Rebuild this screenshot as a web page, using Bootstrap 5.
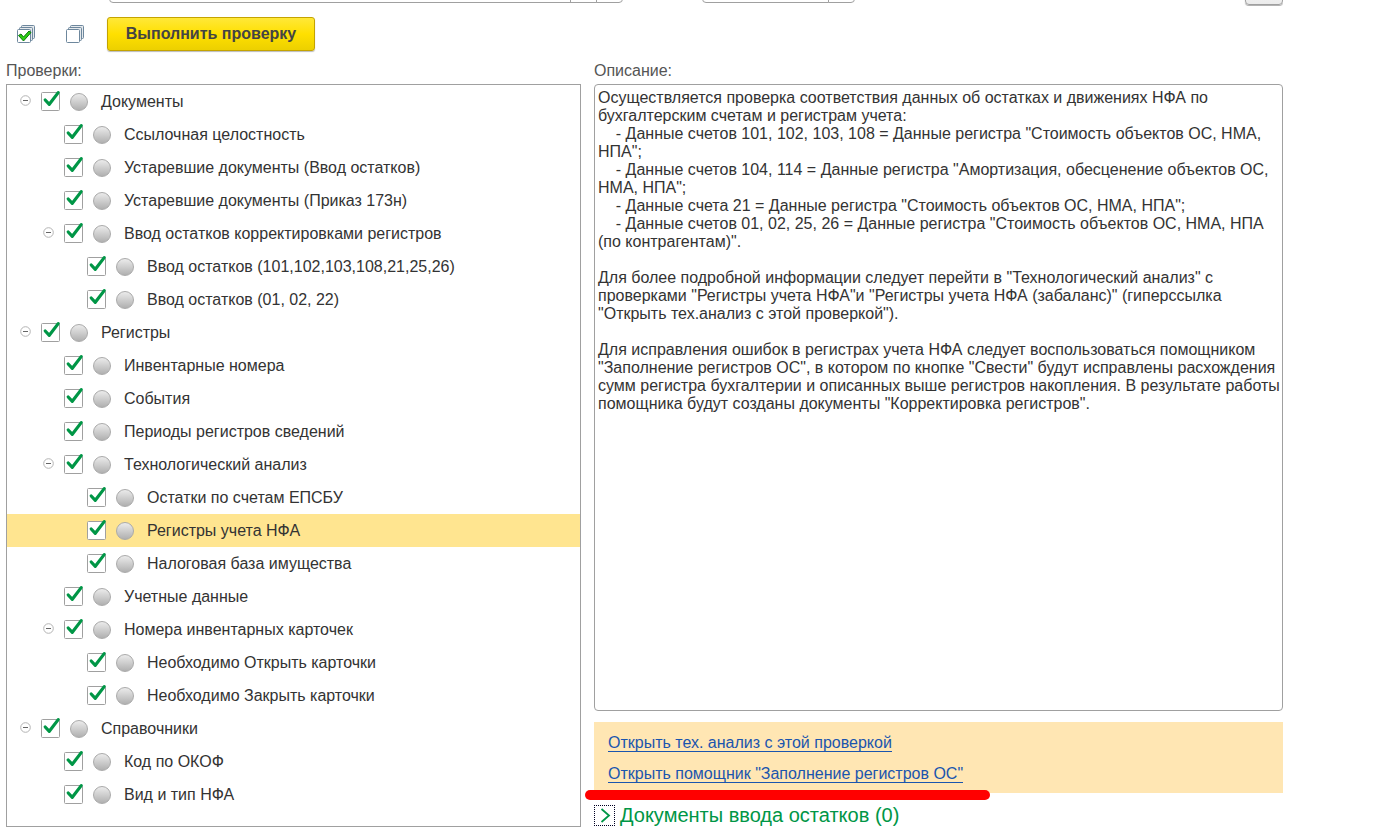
<!DOCTYPE html>
<html lang="ru">
<head>
<meta charset="utf-8">
<meta name="viewport" content="width=device-width, initial-scale=1">
<title>Проверка учета</title>
<link href="https://cdn.jsdelivr.net/npm/bootstrap@5.3.0/dist/css/bootstrap.min.css" rel="stylesheet">
<style>
body { font: 16px/18px "Liberation Sans", Arial, sans-serif; color: #333; background: #fff; }
.page { padding: 0 110px 0 6px; }
.params { height: 6px; overflow: hidden; padding-left: 103px; }
.params .form-control, .params .btn { height: 28px; border-color: #a0a0a0; border-radius: 4px; padding: 0 8px; }
.params .input-group { margin-bottom: 3px; }
.params .btn { background: #fff; width: 27px; }
.params .btn.menu { width: 38px; background: linear-gradient(#fff, #ebebeb); box-shadow: 0 1px 1px #aaa; margin-bottom: 1px; }
.period { width: 514px; margin-right: 79px; }
.kind { width: 153px; }
.tools { height: 55px; padding-left: 10px; }
.tool { width: 20px; height: 20px; margin-right: 29px; }
.run { width: 208px; height: 34px; margin-left: -7px; padding: 0; font-size: 16px; font-weight: 700; color: #444; border: 1px solid #c4a300; border-radius: 3px; background: linear-gradient(#ffe838, #ffe000 50%, #ecd000); box-shadow: 0 1px 1px #bbb; }
.caption { color: #555; height: 23px; line-height: 20px; }
.columns { gap: 13px; }
.tree-side { flex: 575 1 0; min-width: 0; }
.info-side { flex: 689 1 0; min-width: 0; }
.tree { border: 1px solid #a0a0a0; padding-bottom: 15px; }
.node { height: 33px; padding-left: 13px; }
.node.level-1 { padding-left: 36px; }
.node.level-2 { padding-left: 59px; }
.node.selected { background: #ffe590; }
.fold { width: 11px; height: 33px; margin-right: 10px; }
.fold svg { display: block; }
.tick { appearance: none; width: 20px; height: 22px; margin: 0 9px 2px 0; background: url("data:image/svg+xml,%3Csvg xmlns='http://www.w3.org/2000/svg' width='20' height='22'%3E%3Crect x='.5' y='2.5' width='18' height='18' rx='1' fill='white' stroke='%23a0a0a0'/%3E%3C/svg%3E") no-repeat; }
.tick:checked { background-image: url("data:image/svg+xml,%3Csvg xmlns='http://www.w3.org/2000/svg' width='20' height='22'%3E%3Crect x='.5' y='2.5' width='18' height='18' rx='1' fill='white' stroke='%23a0a0a0'/%3E%3Cpath d='M4.2 10 8.300 14.300 17.2 2.6' fill='none' stroke='%23009646' stroke-width='3.2' stroke-linecap='round' stroke-linejoin='round'/%3E%3C/svg%3E"); }
.state { width: 18px; height: 18px; margin-right: 13px; border: 1px solid #aaa; border-radius: 50%; background: linear-gradient(#ebebeb, #b0b0b0); }
.about { display: block; height: 627px; padding: 4px 0 4px 3px; resize: none; color: #333; border: 1px solid #a0a0a0; border-radius: 4px; font-size: 16px; line-height: 18px; }
.actions { background: #ffe6b3; margin-top: 11px; padding: 12px 14px 10px; gap: 13px; }
.actions a { color: #1a55ae; line-height: 17px; text-decoration: none; border-bottom: 1px solid #1a55ae; }
.marker { left: -9px; top: 68px; width: 405px; height: 10px; border-radius: 5px; background: #f00; }
.docs { margin-top: 12px; gap: 5px; color: #009646; font-size: 20px; line-height: 21px; }
.docs .arrow { width: 21px; height: 21px; border: 1px dotted #002; }
</style>
</head>
<body>
<main class="page">
  <div class="params d-flex align-items-end">
    <div class="input-group flex-nowrap period">
      <input class="form-control" type="text" aria-label="Организация">
      <button class="btn" type="button" aria-label="Выбрать"></button>
      <button class="btn" type="button" aria-label="Открыть"></button>
    </div>
    <div class="input-group flex-nowrap kind">
      <input class="form-control" type="text" aria-label="Дата">
      <button class="btn" type="button" aria-label="Календарь"></button>
    </div>
    <button class="btn menu ms-auto" type="button" aria-label="Еще"></button>
  </div>

  <div class="tools d-flex align-items-center">
    <button class="tool btn p-0 border-0 d-flex" type="button" aria-label="Отметить все">
      <svg width="20" height="20" viewBox="0 0 20 20"><g stroke="#6d879d"><rect x="5.500" y="1.500" width="13" height="13" rx="1" fill="#e5e9ec"/><rect x="3.500" y="3.500" width="13" height="13" rx="1" fill="#e5e9ec"/><rect x="1.500" y="5.500" width="13" height="13" rx="1" fill="#fff"/></g><path d="M2.500 11.500 5 10l2.500 3 5.500-6 2 1.500L7.500 17Z" fill="#2dcc12" stroke="#08780b"/></svg>
    </button>
    <button class="tool btn p-0 border-0 d-flex" type="button" aria-label="Снять отметки">
      <svg width="20" height="20" viewBox="0 0 20 20"><g stroke="#6d879d"><rect x="5.500" y="1.500" width="13" height="13" rx="1" fill="#e5e9ec"/><rect x="3.500" y="3.500" width="13" height="13" rx="1" fill="#e5e9ec"/><rect x="1.500" y="5.500" width="13" height="13" rx="1" fill="#fff"/></g></svg>
    </button>
    <button class="btn run" type="button">Выполнить проверку</button>
  </div>

  <div class="columns d-flex">
    <section class="tree-side">
      <div class="caption">Проверки:</div>
      <div class="tree" id="tree"></div>
    </section>
    <section class="info-side">
      <label class="caption d-block" for="about">Описание:</label>
      <textarea class="about w-100" id="about" spellcheck="false" readonly>Осуществляется проверка соответствия данных об остатках и движениях НФА по бухгалтерским счетам и регистрам учета:
    - Данные счетов 101, 102, 103, 108 = Данные регистра "Стоимость объектов ОС, НМА, НПА";
    - Данные счетов 104, 114 = Данные регистра "Амортизация, обесценение объектов ОС, НМА, НПА";
    - Данные счета 21 = Данные регистра "Стоимость объектов ОС, НМА, НПА";
    - Данные счетов 01, 02, 25, 26 = Данные регистра "Стоимость объектов ОС, НМА, НПА (по контрагентам)".

Для более подробной информации следует перейти в "Технологический анализ" с проверками "Регистры учета НФА"и "Регистры учета НФА (забаланс)" (гиперссылка "Открыть тех.анализ с этой проверкой").

Для исправления ошибок в регистрах учета НФА следует воспользоваться помощником "Заполнение регистров ОС", в котором по кнопке "Свести" будут исправлены расхождения сумм регистра бухгалтерии и описанных выше регистров накопления. В результате работы помощника будут созданы документы "Корректировка регистров".</textarea>
      <div class="actions position-relative d-flex flex-column align-items-start">
        <a href="#">Открыть тех. анализ с этой проверкой</a>
        <a href="#">Открыть помощник "Заполнение регистров ОС"</a>
        <span class="marker position-absolute"></span>
      </div>
      <button class="docs btn p-0 border-0 d-flex align-items-center" type="button">
        <span class="arrow d-flex"><svg width="19" height="19" viewBox="0 0 19 19"><path d="M6.500 3 14 9.500 6.500 16" fill="none" stroke="#009646" stroke-width="1.800"/></svg></span>
        <span>Документы ввода остатков (0)</span>
      </button>
    </section>
  </div>
</main>
<script>
// [level, title, has children]
const nodes = [
  [0, "Документы", 1],
  [1, "Ссылочная целостность"],
  [1, "Устаревшие документы (Ввод остатков)"],
  [1, "Устаревшие документы (Приказ 173н)"],
  [1, "Ввод остатков корректировками регистров", 1],
  [2, "Ввод остатков (101,102,103,108,21,25,26)"],
  [2, "Ввод остатков (01, 02, 22)"],
  [0, "Регистры", 1],
  [1, "Инвентарные номера"],
  [1, "События"],
  [1, "Периоды регистров сведений"],
  [1, "Технологический анализ", 1],
  [2, "Остатки по счетам ЕПСБУ"],
  [2, "Регистры учета НФА"],
  [2, "Налоговая база имущества"],
  [1, "Учетные данные"],
  [1, "Номера инвентарных карточек", 1],
  [2, "Необходимо Открыть карточки"],
  [2, "Необходимо Закрыть карточки"],
  [0, "Справочники", 1],
  [1, "Код по ОКОФ"],
  [1, "Вид и тип НФА"]
];
const foldIcon = '<svg width="11" height="31" viewBox="0 0 11 31"><circle cx="5.5" cy="14.5" r="4.800" fill="#fff" stroke="#b4b4b4"/><path d="M3 14.500h5" stroke="#666"/></svg>';
document.getElementById("tree").innerHTML = nodes.map(([level, title, parent], i) => `
  <div class="node level-${level} d-flex align-items-center${title === "Регистры учета НФА" ? " selected" : ""}">
    ${parent ? `<button class="fold btn p-0 border-0" type="button" aria-label="Свернуть">${foldIcon}</button>` : '<span class="fold"></span>'}
    <input class="tick" type="checkbox" id="check-${i}" checked>
    <span class="state"></span>
    <label for="check-${i}">${title}</label>
  </div>`).join("");
</script>
<script src="https://cdn.jsdelivr.net/npm/bootstrap@5.3.0/dist/js/bootstrap.bundle.min.js"></script>
</body>
</html>
